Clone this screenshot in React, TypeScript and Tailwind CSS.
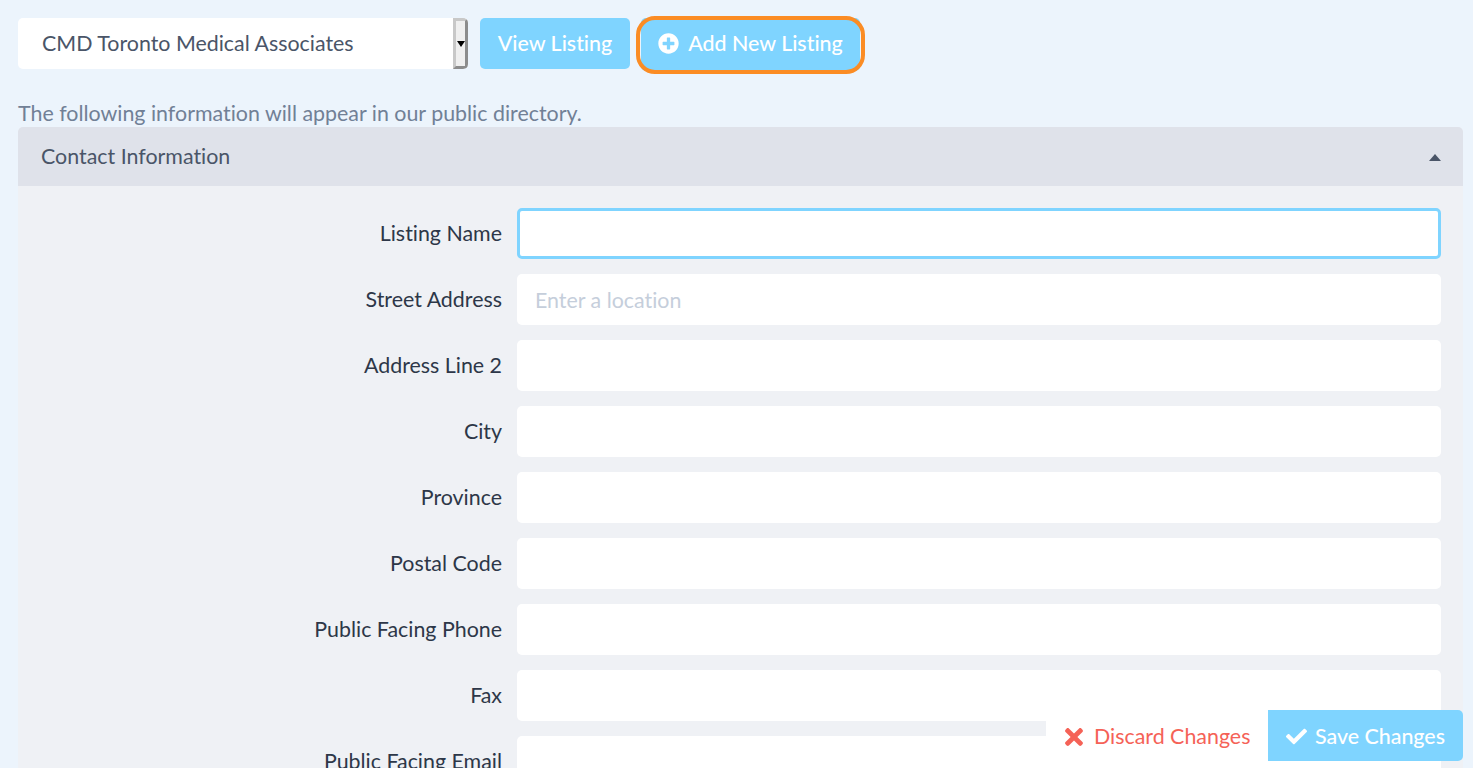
import { FaCheck, FaPlusCircle, FaTimes } from 'react-icons/fa'

const fields = [
  { label: 'Listing Name', focused: true },
  { label: 'Street Address', placeholder: 'Enter a location' },
  { label: 'Address Line 2' },
  { label: 'City' },
  { label: 'Province' },
  { label: 'Postal Code' },
  { label: 'Public Facing Phone' },
  { label: 'Fax' },
  { label: 'Public Facing Email' },
]

function ListingSelect() {
  return (
    <div className="flex h-[51px] w-[450px] items-stretch overflow-hidden rounded-[5px] bg-white">
      <div className="flex flex-1 items-center pb-[1px] pl-[24px] text-[#4a5568]">CMD Toronto Medical Associates</div>
      {/* native select arrow */}
      <div className="flex w-[15px] items-center justify-center border-t-[3px] border-r-[3px] border-b-[3px] border-l-[3px] border-t-[#c8c8c8] border-r-[#8c8c8c] border-b-[#8c8c8c] border-l-[#c8c8c8] bg-[#efefef]">
        <svg width="8" height="6" viewBox="0 0 8 6" className="mt-[1px] shrink-0">
          <path d="M0 0h8L4 6z" fill="#000" />
        </svg>
      </div>
    </div>
  )
}

function FormRow({ label, placeholder, focused }: { label: string; placeholder?: string; focused?: boolean }) {
  return (
    <div className="flex items-center">
      <label className="w-[499px] pr-[15px] pb-[1px] text-right leading-[24px] text-[#2d3748]">{label}</label>
      <input
        placeholder={placeholder}
        className={
          'h-[51px] w-[924px] rounded-[5px] bg-white px-[18px] outline-none placeholder:text-[#c5cedb] ' +
          (focused ? 'border-[3px] border-[#7fd4ff]' : '')
        }
      />
    </div>
  )
}

export default function App() {
  return (
    <div className="relative h-screen overflow-hidden bg-[#ecf4fc] pt-[18px] pr-[10px] pl-[18px] font-['Lato',sans-serif] text-[21.4px] [font-variant-ligatures:none]">
      <div className="flex h-[51px] items-start">
        <ListingSelect />
        <button className="ml-[12px] h-[51px] w-[150px] rounded-[5px] bg-[#7fd4ff] pb-[1px] font-medium text-white">
          View Listing
        </button>
        <button className="relative ml-[11px] flex h-[53px] w-[219px] items-center justify-center gap-[9px] rounded-[5px] bg-[#7fd4ff] pb-[3px] font-medium text-white">
          <FaPlusCircle className="text-[21px]" />
          Add New Listing
          {/* focus ring */}
          <span className="absolute -top-[2px] -right-[5px] -bottom-[3px] -left-[5px] rounded-[19px] border-4 border-[#fb8c24]" />
        </button>
      </div>

      <p className="mt-[32px] leading-[24px] text-[#718096]">The following information will appear in our public directory.</p>

      <div className="mt-[2px] rounded-t-[5px] bg-[#eff1f5]">
        <div className="flex h-[59px] items-center justify-between rounded-t-[5px] bg-[#dfe2ea] pr-[22px] pb-[1px] pl-[23px] text-[#4a5568]">
          Contact Information
          <svg width="12" height="7" viewBox="0 0 12 7" className="mt-[3px]">
            <path d="M0 7L6 0l6 7z" fill="#4a5568" />
          </svg>
        </div>
        <div className="flex flex-col gap-[15px] pt-[22px] pb-[20px]">
          {fields.map((f) => (
            <FormRow key={f.label} label={f.label} placeholder={f.placeholder} focused={f.focused} />
          ))}
        </div>
      </div>

      <div className="absolute right-[10px] bottom-[7px] flex h-[51px] items-stretch">
        <button className="flex w-[222px] items-center gap-[7px] bg-white pt-[2px] pl-[15px] text-[#f56257]">
          <FaTimes className="text-[26px]" />
          Discard Changes
        </button>
        <button className="flex w-[195px] items-center justify-center gap-[8px] rounded-r-[5px] bg-[#7fd4ff] pt-[2px] font-medium text-white">
          <FaCheck className="text-[21px]" />
          Save Changes
        </button>
      </div>
    </div>
  )
}
